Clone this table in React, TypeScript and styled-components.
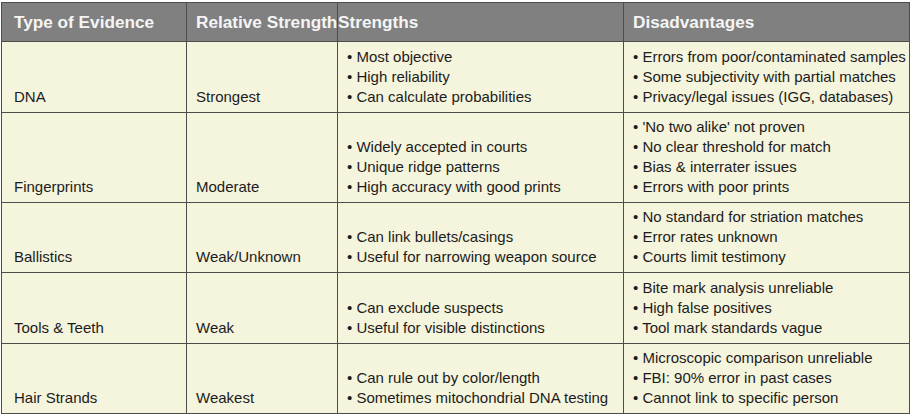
import React from "react";
import styled, { createGlobalStyle } from "styled-components";

const Global = createGlobalStyle`
  html, body { margin: 0; padding: 0; background: #ffffff; }
  body { font-family: "Liberation Sans", Arial, Helvetica, sans-serif; }
`;

const Page = styled.div`
  padding: 2px 0 0 1px;
`;

const Grid = styled.div`
  display: grid;
  grid-template-columns: 185px 151px 286px 286px;
  grid-template-rows: 39px 71px 90px 70px 71px 70px;
  width: 909px;
  box-sizing: border-box;
  border-left: 1px solid #4d4d4d;
  border-top: 1px solid #4d4d4d;
`;

const HeadCell = styled.div<{ $pad: number }>`
  box-sizing: border-box;
  background: #808080;
  color: #f5f5f5;
  font-weight: bold;
  font-size: 17.2px;
  line-height: 20px;
  white-space: nowrap;
  display: flex;
  align-items: center;
  padding-left: ${(p) => p.$pad}px;
  border-right: 1px solid #4d4d4d;
  border-bottom: 1px solid #4d4d4d;
  overflow: visible;
`;

const Cell = styled.div<{ $pad: number }>`
  box-sizing: border-box;
  background: #f5f4dd;
  color: #1c1c1c;
  font-size: 15px;
  line-height: 20px;
  white-space: nowrap;
  display: flex;
  flex-direction: column;
  justify-content: flex-end;
  padding: 0 0 5px ${(p) => p.$pad}px;
  border-right: 1px solid #4d4d4d;
  border-bottom: 1px solid #4d4d4d;
`;

const Line = styled.div``;

type Row = {
  type: string;
  strength: string;
  pros: string[];
  cons: string[];
};

const rows: Row[] = [
  {
    type: "DNA",
    strength: "Strongest",
    pros: ["Most objective", "High reliability", "Can calculate probabilities"],
    cons: [
      "Errors from poor/contaminated samples",
      "Some subjectivity with partial matches",
      "Privacy/legal issues (IGG, databases)",
    ],
  },
  {
    type: "Fingerprints",
    strength: "Moderate",
    pros: ["Widely accepted in courts", "Unique ridge patterns", "High accuracy with good prints"],
    cons: [
      "'No two alike' not proven",
      "No clear threshold for match",
      "Bias & interrater issues",
      "Errors with poor prints",
    ],
  },
  {
    type: "Ballistics",
    strength: "Weak/Unknown",
    pros: ["Can link bullets/casings", "Useful for narrowing weapon source"],
    cons: ["No standard for striation matches", "Error rates unknown", "Courts limit testimony"],
  },
  {
    type: "Tools & Teeth",
    strength: "Weak",
    pros: ["Can exclude suspects", "Useful for visible distinctions"],
    cons: ["Bite mark analysis unreliable", "High false positives", "Tool mark standards vague"],
  },
  {
    type: "Hair Strands",
    strength: "Weakest",
    pros: ["Can rule out by color/length", "Sometimes mitochondrial DNA testing"],
    cons: [
      "Microscopic comparison unreliable",
      "FBI: 90% error in past cases",
      "Cannot link to specific person",
    ],
  },
];

export default function App() {
  return (
    <>
      <Global />
      <Page>
        <Grid>
          <HeadCell $pad={12}>Type of Evidence</HeadCell>
          <HeadCell $pad={9}>Relative Strength</HeadCell>
          <HeadCell $pad={0}>Strengths</HeadCell>
          <HeadCell $pad={9}>Disadvantages</HeadCell>
          {rows.map((r) => (
            <React.Fragment key={r.type}>
              <Cell $pad={12}>
                <Line>{r.type}</Line>
              </Cell>
              <Cell $pad={9}>
                <Line>{r.strength}</Line>
              </Cell>
              <Cell $pad={9}>
                {r.pros.map((t) => (
                  <Line key={t}>• {t}</Line>
                ))}
              </Cell>
              <Cell $pad={9}>
                {r.cons.map((t) => (
                  <Line key={t}>• {t}</Line>
                ))}
              </Cell>
            </React.Fragment>
          ))}
        </Grid>
      </Page>
    </>
  );
}
